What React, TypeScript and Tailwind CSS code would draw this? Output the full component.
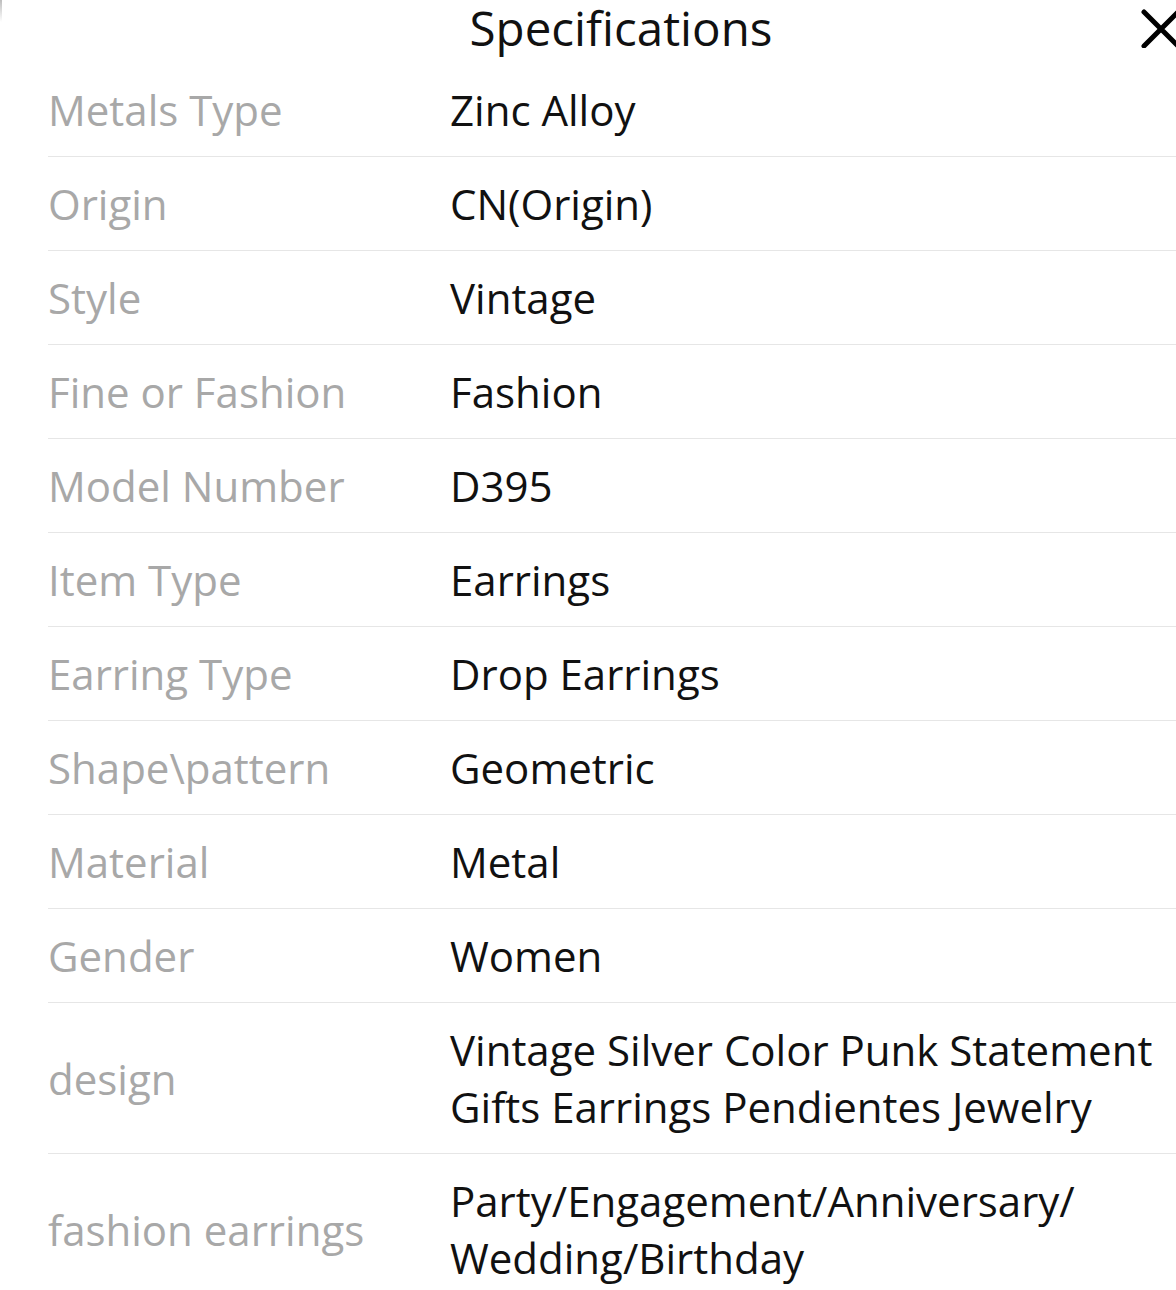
const specs: [string, string][] = [
  ['Metals Type', 'Zinc Alloy'],
  ['Origin', 'CN(Origin)'],
  ['Style', 'Vintage'],
  ['Fine or Fashion', 'Fashion'],
  ['Model Number', 'D395'],
  ['Item Type', 'Earrings'],
  ['Earring Type', 'Drop Earrings'],
  ['Shape\\pattern', 'Geometric'],
  ['Material', 'Metal'],
  ['Gender', 'Women'],
  ['design', 'Vintage Silver Color Punk Statement Gifts Earrings Pendientes Jewelry'],
  ['fashion earrings', 'Party/Engagement/Anniversary/ Wedding/Birthday'],
]

function SpecRow({ label, value }: { label: string; value: string }) {
  return (
    <div className="flex items-center border-b border-[#e6e6e6] py-[18px]">
      <div className="w-[402px] shrink-0 text-[#a8a8a8]">{label}</div>
      <div className="min-w-0 flex-1 text-[#111]">{value}</div>
    </div>
  )
}

export default function App() {
  return (
    <div
      className="relative h-[1290px] w-full overflow-hidden bg-white"
      style={{ fontFamily: '"Open Sans", "Noto Sans", sans-serif' }}
    >
      <div className="absolute left-0 top-0 h-[22px] w-[2px] bg-gradient-to-b from-[#bdbdbd] to-transparent" />
      <div className="flex h-[63px] items-start justify-center pl-[66px]">
        <h1 className="text-[47.5px] leading-[56px] font-normal text-[#111]">Specifications</h1>
      </div>
      <button className="absolute right-[-6px] top-[8px] text-black" aria-label="Close">
        <svg width="42" height="40" viewBox="0 0 42 40" fill="none" stroke="currentColor" strokeWidth="5" strokeLinecap="round">
          <path d="M4 4 L38 38 M38 4 L4 38" />
        </svg>
      </button>
      <div className="ml-[48px] text-[42px] leading-[57px]">
        {specs.map(([l, v]) => (
          <SpecRow key={l} label={l} value={v} />
        ))}
      </div>
    </div>
  )
}
